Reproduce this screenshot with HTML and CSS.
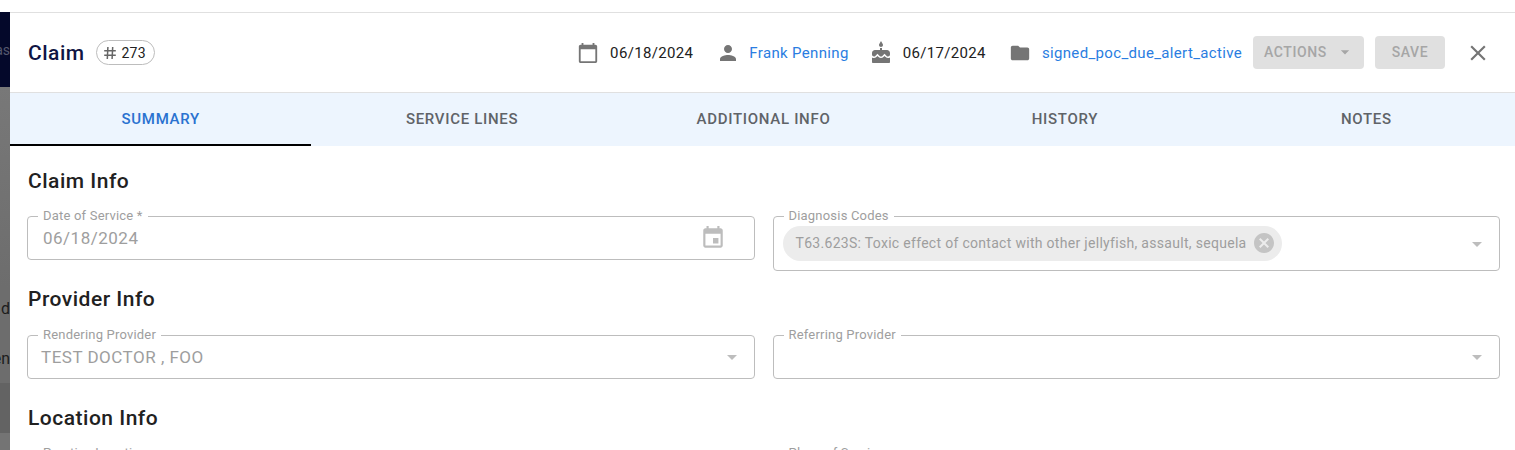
FILE: index.html
```html
<!DOCTYPE html>
<html lang="en">
<head>
<meta charset="utf-8">
<title>Claim</title>
<link rel="stylesheet" href="styles.css">
</head>
<body>
<div class="backdrop">
  <div class="backdrop-nav"><span class="frag frag-as">as</span></div>
  <div class="backdrop-body">
    <span class="frag frag-d">d</span>
    <span class="frag frag-en">en</span>
  </div>
</div>
<main class="dialog">
  <header class="head">
    <h1 class="title">Claim</h1>
    <span class="idchip">
      <svg class="ic-hash" viewBox="0 0 12 12"><path d="M3.900 0 3.300 12M8.700 0 8.100 12M.2 3.800h11.600M.2 8.200h11.600" fill="none" stroke="#666" stroke-width="1.500"/></svg>
      <span>273</span>
    </span>
    <div class="meta">
      <span class="meta-item item-cal">
        <svg class="ic" viewBox="0 0 24 24"><path fill="#757575" d="M20 3h-1V1h-2v2H7V1H5v2H4c-1.100 0-2 .9-2 2v16c0 1.100.9 2 2 2h16c1.100 0 2-.9 2-2V5c0-1.100-.9-2-2-2zm0 18H4V8h16v13z"/></svg>
        <span>06/18/2024</span>
      </span>
      <span class="meta-item item-person">
        <svg class="ic ic-lg" viewBox="0 0 24 24"><path fill="#757575" d="M12 12c2.210 0 4-1.790 4-4s-1.790-4-4-4-4 1.790-4 4 1.790 4 4 4zm0 2c-2.670 0-8 1.340-8 4v2h16v-2c0-2.660-5.330-4-8-4z"/></svg>
        <span class="link">Frank Penning</span>
      </span>
      <span class="meta-item item-cake">
        <svg class="ic ic-lg" viewBox="0 0 24 24"><path fill="#757575" d="M12 6c1.110 0 2-.9 2-2 0-.38-.1-.73-.29-1.030L12 0l-1.710 2.970c-.19.300-.29.650-.29 1.030 0 1.100.9 2 2 2zm4.600 9.990-1.070-1.070-1.080 1.070c-1.300 1.300-3.580 1.310-4.890 0l-1.070-1.070-1.090 1.070C6.750 16.640 5.880 17 4.960 17c-.730 0-1.400-.23-1.960-.61V21c0 .55.450 1 1 1h16c.55 0 1-.45 1-1v-4.610c-.56.380-1.230.61-1.960.61-.92 0-1.790-.36-2.440-1.010zM18 9h-5V7h-2v2H6c-1.660 0-3 1.340-3 3v1.540c0 1.080.88 1.960 1.960 1.960.52 0 1.020-.2 1.380-.57l2.140-2.130 2.130 2.130c.74.740 2.030.74 2.770 0l2.140-2.130 2.130 2.130c.37.370.86.570 1.380.57 1.080 0 1.960-.88 1.960-1.960V12C21 10.340 19.660 9 18 9z"/></svg>
        <span>06/17/2024</span>
      </span>
      <span class="meta-item item-folder">
        <svg class="ic" viewBox="0 0 24 24"><path fill="#757575" d="M10 4H4c-1.100 0-1.990.9-1.990 2L2 18c0 1.100.9 2 2 2h16c1.100 0 2-.9 2-2V8c0-1.100-.9-2-2-2h-8l-2-2z"/></svg>
        <span class="link">signed_poc_due_alert_active</span>
      </span>
    </div>
    <button class="btn btn-actions" disabled>ACTIONS<svg class="ic-caret" viewBox="0 0 24 24"><path fill="#a6a6a6" d="M7 10l5 5 5-5z"/></svg></button>
    <button class="btn btn-save" disabled>SAVE</button>
    <svg class="ic-close" viewBox="0 0 24 24"><path fill="#757575" d="M19 6.410 17.590 5 12 10.590 6.410 5 5 6.410 10.590 12 5 17.590 6.410 19 12 13.410 17.590 19 19 17.590 13.410 12z"/></svg>
  </header>
  <nav class="tabs">
    <a class="tab tab-active">SUMMARY</a>
    <a class="tab">SERVICE LINES</a>
    <a class="tab">ADDITIONAL INFO</a>
    <a class="tab">HISTORY</a>
    <a class="tab">NOTES</a>
  </nav>
  <section class="content">
    <h2 class="section section-first">Claim Info</h2>
    <div class="row row-claim">
      <fieldset class="field field-short">
        <legend>Date of Service *</legend>
        <span class="value value-date">06/18/2024</span>
        <svg class="ic-event" viewBox="0 0 24 24"><path fill="#bdbdbd" d="M17 12h-5v5h5v-5zM16 1v2H8V1H6v2H5c-1.110 0-1.990.9-1.990 2L3 19c0 1.100.89 2 2 2h14c1.100 0 2-.9 2-2V5c0-1.100-.9-2-2-2h-1V1h-2zm3 18H5V8h14v11z"/></svg>
      </fieldset>
      <fieldset class="field field-tall">
        <legend>Diagnosis Codes</legend>
        <span class="chip">
          <span class="chip-text">T63.623S: Toxic effect of contact with other jellyfish, assault, sequela</span>
          <svg class="ic-cancel" viewBox="0 0 24 24"><path fill="#c4c4c4" d="M12 2C6.470 2 2 6.470 2 12s4.470 10 10 10 10-4.470 10-10S17.530 2 12 2zm5 13.590L15.590 17 12 13.410 8.410 17 7 15.590 10.590 12 7 8.410 8.410 7 12 10.590 15.590 7 17 8.410 13.410 12 17 15.590z"/></svg>
        </span>
        <svg class="ic-drop" viewBox="0 0 24 24"><path fill="#bdbdbd" d="M7 10l5 5 5-5z"/></svg>
      </fieldset>
    </div>
    <h2 class="section">Provider Info</h2>
    <div class="row row-provider">
      <fieldset class="field field-short">
        <legend>Rendering Provider</legend>
        <span class="value">TEST DOCTOR , FOO</span>
        <svg class="ic-drop" viewBox="0 0 24 24"><path fill="#bdbdbd" d="M7 10l5 5 5-5z"/></svg>
      </fieldset>
      <fieldset class="field field-short">
        <legend>Referring Provider</legend>
        <span class="value"></span>
        <svg class="ic-drop" viewBox="0 0 24 24"><path fill="#bdbdbd" d="M7 10l5 5 5-5z"/></svg>
      </fieldset>
    </div>
    <h2 class="section">Location Info</h2>
    <div class="row row-location">
      <fieldset class="field field-short">
        <legend>Practice Location</legend>
      </fieldset>
      <fieldset class="field field-short">
        <legend>Place of Service</legend>
      </fieldset>
    </div>
  </section>
</main>
</body>
</html>
```

FILE: styles.css
```css
* { box-sizing: border-box; }
html, body { margin: 0; height: 450px; overflow: hidden; background: #fff; }
body { display: flex; padding-top: 12px; font-family: Roboto, "Liberation Sans", sans-serif; color: #212121; }
.backdrop { width: 10px; flex: none; display: flex; flex-direction: column; overflow: hidden; }
.backdrop-nav { height: 75px; flex: none; background: #04082a; color: #55586e; font-size: 14px; display: flex; align-items: center; justify-content: flex-end; }
.backdrop-body { flex: 1; background: linear-gradient(#787878 0, #6d6d6d 200px, #6d6d6d 296px, #636363 296px, #636363 346px, #747474 346px); color: #1c1c1c; font-size: 16px; display: flex; flex-direction: column; align-items: flex-end; padding-top: 214px; gap: 34px; }
.frag { line-height: 16px; white-space: nowrap; }
.dialog { flex: 1; min-width: 0; min-height: 0; overflow: hidden; border-top: 1px solid #e0e0e0; display: flex; flex-direction: column; }
.head { height: 80px; flex: none; display: flex; align-items: center; padding: 0 24px 0 18px; border-bottom: 1px solid #e0e0e0; }
.title { margin: 0; font-size: 21px; font-weight: 500; color: #0f1544; line-height: 24px; letter-spacing: .5px; }
.idchip { margin-left: 11px; height: 25px; width: 59px; border: 1px solid #bdbdbd; border-radius: 13px; display: flex; align-items: center; padding-left: 7px; gap: 6px; font-size: 14px; letter-spacing: .2px; }
.ic-hash { width: 12px; height: 12px; }
.meta { margin-left: auto; display: flex; align-items: center; font-size: 15px; letter-spacing: .34px; }
.meta-item { display: flex; align-items: center; gap: 11px; }
.item-cal { margin-right: 23px; }
.item-person { margin-right: 20px; gap: 9px; }
.item-cake { margin-right: 23px; gap: 10px; }
.item-folder { margin-right: 11px; }
.ic { width: 22px; height: 22px; flex: none; }
.ic-lg { width: 24px; height: 24px; }
.link { color: #2a7de1; }
.btn { border: 0; height: 33px; border-radius: 4px; background: #e0e0e0; color: #a6a6a6; font: 500 14px Roboto, sans-serif; letter-spacing: .6px; display: flex; align-items: center; padding: 0 0 1px; flex: none; }
.btn-actions { width: 111px; margin-right: 11px; gap: 8px; padding-left: 11px; }
.btn-save { width: 70px; margin-right: 20px; justify-content: center; }
.ic-caret { width: 20px; height: 20px; }
.ic-close { width: 26px; height: 26px; flex: none; }
.tabs { height: 53px; flex: none; display: flex; background: #edf5fe; margin-right: -2px; }
.tab { flex: 1; display: flex; align-items: center; justify-content: center; font-size: 15px; font-weight: 500; letter-spacing: .7px; color: #5f6368; border-bottom: 2px solid transparent; }
.tab-active { color: #2a72d0; border-bottom-color: #000; }
.content { padding: 0 15px 0 17px; flex: 1; min-height: 0; overflow: hidden; }
.section { margin: 0; padding-left: 1px; font-size: 21px; font-weight: 500; line-height: 24px; letter-spacing: .5px; color: #212121; }
.section-first { margin-top: 23px; }
.row { display: grid; grid-template-columns: 1fr 1fr; column-gap: 18px; align-items: start; }
.row-claim { margin-top: 16px; height: 78px; }
.row-provider { margin-top: 17px; height: 78px; }
.row-location { margin-top: 16px; }
.field { margin: 0; padding: 0 10px; border: 1px solid #bdbdbd; border-radius: 4px; display: flex; align-items: center; min-width: 0; }
.field-short { height: 51px; }
.field-tall { height: 62px; }
.field legend { padding: 0 5px; font-size: 13px; line-height: 14px; color: #9e9e9e; letter-spacing: .2px; }
.value { flex: 1; font-size: 17px; color: #9e9e9e; letter-spacing: .5px; margin-top: -6px; padding-left: 3px; }
.value-date { padding-left: 5px; }
.ic-event { width: 26px; height: 26px; margin-top: -6px; margin-right: 18px; flex: none; }
.ic-drop { width: 24px; height: 24px; margin-left: auto; margin-top: -6px; flex: none; }
.field-tall .ic-drop { margin-top: -5px; }
.chip { height: 35px; margin-top: -7px; margin-left: -1px; background: #ececec; border-radius: 18px; display: inline-flex; align-items: center; padding: 0 6px 0 13px; gap: 5px; font-size: 14px; color: #9e9e9e; letter-spacing: .3px; white-space: nowrap; }
.ic-cancel { width: 24px; height: 24px; flex: none; }
```
